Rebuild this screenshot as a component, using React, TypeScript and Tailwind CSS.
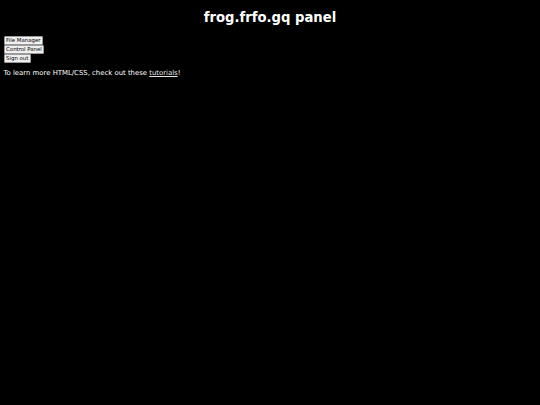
export default function App() {
  const btn =
    "block h-[9px] px-[1.6px] bg-[#efefef] border-[0.5px] border-[#9a9a9a] rounded-[1px] text-black text-[5.4px] leading-[7px] [font-family:'DejaVu_Sans',sans-serif]";
  return (
    <div className="min-h-[405px] w-full bg-black text-white px-[3.5px] pt-[4px] pb-[3px] [font-family:'DejaVu_Sans',sans-serif]">
      <h1 className="mt-[6.3px] mb-[10.3px] text-center text-[13.2px] leading-[15.4px] font-bold">
        frog.frfo.gq panel
      </h1>
      <div className="flex flex-col items-start">
        <button className={btn}>File Manager</button>
        <button className={btn}>Control Panel</button>
        <button className={btn}>Sign out</button>
      </div>
      <p className="mt-[6px] text-[6.9px] leading-[8px]">
        To learn more HTML/CSS, check out these <a className="underline text-[#e6e6e6]" href="#">tutorials</a>!
      </p>
    </div>
  );
}
